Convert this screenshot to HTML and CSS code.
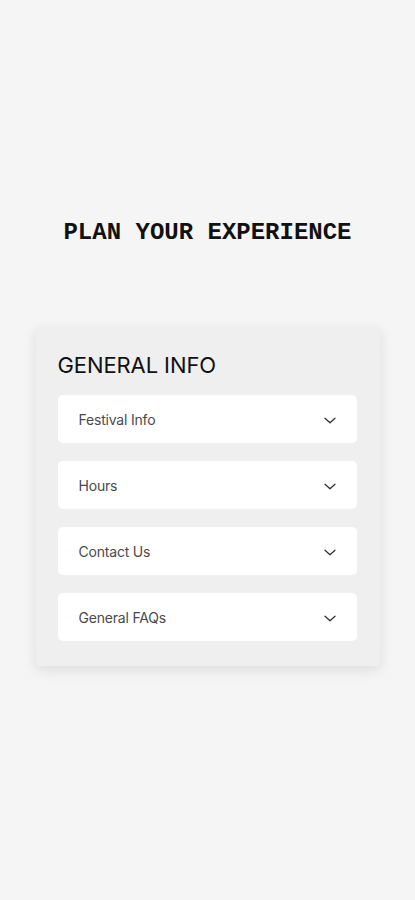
FILE: index.html
```html
<!DOCTYPE html>
<html lang="en">
<head>
<meta charset="utf-8">
<title>Plan Your Experience</title>
<link rel="stylesheet" href="styles.css">
</head>
<body>
<main class="page">
  <h1 class="title">PLAN YOUR EXPERIENCE</h1>
  <section class="card">
    <h2 class="card-title">GENERAL INFO</h2>
    <ul class="list">
      <li class="item"><span>Festival Info</span><svg class="chev" viewBox="0 0 12 7" width="12" height="7"><path d="M1 1.2 L6 5.8 L11 1.2" fill="none" stroke="#2a2a2a" stroke-width="1.2" stroke-linecap="round" stroke-linejoin="round"/></svg></li>
      <li class="item"><span>Hours</span><svg class="chev" viewBox="0 0 12 7" width="12" height="7"><path d="M1 1.2 L6 5.8 L11 1.2" fill="none" stroke="#2a2a2a" stroke-width="1.2" stroke-linecap="round" stroke-linejoin="round"/></svg></li>
      <li class="item"><span>Contact Us</span><svg class="chev" viewBox="0 0 12 7" width="12" height="7"><path d="M1 1.2 L6 5.8 L11 1.2" fill="none" stroke="#2a2a2a" stroke-width="1.2" stroke-linecap="round" stroke-linejoin="round"/></svg></li>
      <li class="item"><span>General FAQs</span><svg class="chev" viewBox="0 0 12 7" width="12" height="7"><path d="M1 1.2 L6 5.8 L11 1.2" fill="none" stroke="#2a2a2a" stroke-width="1.2" stroke-linecap="round" stroke-linejoin="round"/></svg></li>
    </ul>
  </section>
</main>
</body>
</html>
```

FILE: styles.css
```css
html, body {
  margin: 0;
  padding: 0;
  background: #f5f5f5;
  height: 100%;
}
.page {
  min-height: 900px;
  display: flex;
  flex-direction: column;
  align-items: center;
  padding-top: 218px;
  box-sizing: border-box;
}
.title {
  margin: 0;
  font-family: "Liberation Mono", "DejaVu Sans Mono", monospace;
  font-weight: bold;
  font-size: 24px;
  line-height: 30px;
  color: #111;
  letter-spacing: 0;
}
.card {
  margin-top: 79px;
  width: 344px;
  box-sizing: border-box;
  background: #efefef;
  border-radius: 4px;
  padding: 24px 23px 25px 22px;
  box-shadow: 0 4px 14px rgba(0,0,0,0.10);
}
.card-title {
  margin: 0 0 16px 0;
  font-family: Inter, "Liberation Sans", sans-serif;
  font-weight: 400;
  font-size: 22px;
  line-height: 28px;
  letter-spacing: -0.1px;
  color: #111;
}
.list {
  list-style: none;
  margin: 0;
  padding: 0;
  display: flex;
  flex-direction: column;
  gap: 18px;
}
.item {
  height: 48px;
  background: #fff;
  border-radius: 5px;
  display: flex;
  align-items: center;
  justify-content: space-between;
  padding: 0 21px 0 21px;
  font-family: Inter, "Liberation Sans", sans-serif;
  font-size: 14px;
  color: #4a4a4a;
  letter-spacing: -0.2px;
}
.chev {
  display: block;
  margin-top: 2px;
}
```
